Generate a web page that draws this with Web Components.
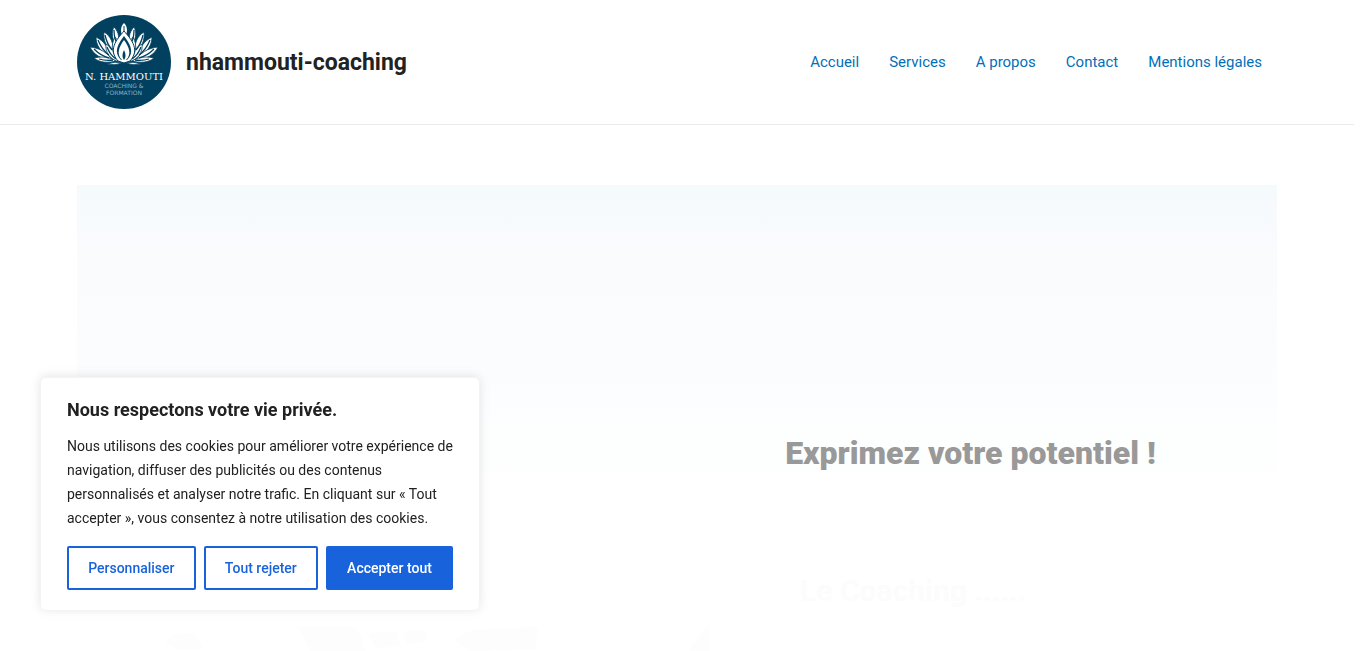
<!DOCTYPE html>
<html lang="fr">
<head>
<meta charset="utf-8">
<meta name="viewport" content="width=device-width, initial-scale=1">
<title>nhammouti-coaching</title>
<style>
    body {
        margin: 0;
        background: #fff;
        color: #212121;
        font-family: Roboto, "Liberation Sans", sans-serif;
    }
</style>
</head>
<body>
<my-app></my-app>

<template id="site-logo">
    <style>
        :host { display: block; }
        a {
            display: flex;
            align-items: center;
            gap: 15px;
            color: #222;
            text-decoration: none;
            font-size: 23px;
            line-height: 29px;
            font-weight: 700;
        }
        svg { display: block; width: 94px; height: 94px; }
    </style>
    <a href="#">
        <svg viewBox="0 0 94 94" aria-hidden="true">
            <defs>
                <!-- left half of the lotus, back petals first, mirrored below -->
                <g id="petals" stroke="#02405f" stroke-width="0.8">
                    <path d="M37 12C34 17 35 25 40 31C43 24 42 17 37 12Z"/>
                    <path d="M27 17C26 25 29 32 36 38C37 29 34 21 27 17Z"/>
                    <path d="M19 22C19 30 24 38 33 42C32 33 27 26 19 22Z"/>
                    <path d="M13 32C17 40 24 44 35 45C31 38 23 33 13 32Z"/>
                    <path d="M17 43C23 48 31 48 39 46C33 42 25 41 17 43Z"/>
                    <path d="M29 29C28 38 33 44 42 47C40 39 36 33 29 29Z"/>
                    <path d="M38 22C33 31 35 40 43 46C46 37 44 29 38 22Z"/>
                    <path d="M30 49Q38 46 45 48Q38 51 30 49Z"/>
                </g>
                <g id="veins" fill="none" stroke="#02405f" stroke-width="1.3">
                    <path d="M37 15Q37 23 40 28"/>
                    <path d="M28 20Q30 29 35 35"/>
                    <path d="M21 25Q25 35 32 40"/>
                    <path d="M17 34Q24 41 32 43"/>
                    <path d="M22 44Q29 46 36 45"/>
                    <path d="M30 32Q33 40 39 44"/>
                </g>
            </defs>
            <circle cx="47" cy="47" r="47" fill="#02405f"/>
            <g fill="#fff">
                <path d="M47 8C43 12 43 18 47 24C51 18 51 12 47 8Z"/>
                <path d="M47 11V17" stroke="#02405f"/>
                <use href="#petals"/>
                <use href="#veins"/>
                <use href="#petals" transform="translate(94 0) scale(-1 1)"/>
                <use href="#veins" transform="translate(94 0) scale(-1 1)"/>
                <path d="M47 16C39 25 31 35 41 46L47 48L53 46C63 35 55 25 47 16Z" stroke="#02405f"/>
                <path d="M47 21C41 29 36 37 44 45H50C58 37 53 29 47 21Z" fill="#02405f"/>
                <path d="M47 25C42 32 39 39 45 45L47 47L49 45C55 39 52 32 47 25Z"/>
                <path d="M47 35Q44 41 47 45Q50 41 47 35Z" fill="#02405f"/>
            </g>
            <g text-anchor="middle" font-weight="400">
                <text x="47" y="65" fill="#fff" font-family="DejaVu Serif, serif" font-size="10">N. HAMMOUTI</text>
                <g fill="#8fb0c0" font-family="DejaVu Sans, sans-serif" font-size="6">
                    <text x="47" y="73">COACHING &amp;</text>
                    <text x="47" y="80">FORMATION</text>
                </g>
            </g>
        </svg>
        <slot></slot>
    </a>
</template>

<template id="nav-link">
    <style>
        :host { display: block; }
        a {
            display: block;
            padding: 0 15px;
            color: #0170b9;
            font-size: 15px;
            line-height: 24px;
            text-decoration: none;
        }
    </style>
    <a href="#"><slot></slot></a>
</template>

<template id="site-header">
    <style>
        :host { display: block; border-bottom: 1px solid #eaeaea; }
        header {
            display: flex;
            align-items: center;
            justify-content: space-between;
            max-width: 1200px;
            margin: 0 auto;
            padding: 15px 20px;
        }
        nav { display: flex; }
    </style>
    <header>
        <site-logo>nhammouti-coaching</site-logo>
        <nav><slot></slot></nav>
    </header>
</template>

<template id="hero-banner">
    <style>
        :host { display: block; }
        section {
            display: grid;
            grid-template-columns: 1fr 1fr;
            padding-top: 248px;
            background: linear-gradient(#f5fafd, #f9fbfd 22%, #fbfcfe 60%, #fdfefe 85%, #fefefe);
        }
        h1 {
            grid-column: 2;
            margin: 0 13px 0 0;
            color: #999;
            font-size: 32px;
            line-height: 40px;
            font-weight: 900;
            text-align: center;
        }
    </style>
    <section><h1><slot></slot></h1></section>
</template>

<template id="coaching-intro">
    <style>
        :host { display: block; }
        section {
            display: grid;
            grid-template-columns: 1fr 1fr;
            padding-top: 98px;
        }
        h2 {
            grid-column: 2;
            margin: 0;
            padding-left: 123px;
            color: #fcfcfc;
            font-size: 30px;
            line-height: 40px;
            font-weight: 700;
        }
        svg {
            display: block;
            width: 100%;
            height: 24px;
            margin-top: 16px;
            overflow: visible;
        }
    </style>
    <section>
        <h2><slot></slot></h2>
        <svg viewBox="0 0 600 24" preserveAspectRatio="xMinYMin" aria-hidden="true">
            <!-- top of the photo, still fading in -->
            <g fill="#fdfdfd">
                <path d="M88 16L96 8L118 6L126 22H100Z"/>
                <path d="M222 0H275L284 8L288 24H232Z"/>
                <path d="M290 6L318 4L324 18L300 22Z"/>
                <path d="M326 4H352L348 14L330 18Z"/>
                <path d="M376 12L398 2L462 0L458 22L392 24Z"/>
                <path d="M612 24L628 0H633V24Z"/>
            </g>
        </svg>
    </section>
</template>

<template id="consent-button">
    <style>
        :host { display: block; flex: 1 1 auto; }
        button {
            width: 100%;
            padding: 8px 19px;
            border: 2px solid #1863dc;
            border-radius: 2px;
            background: transparent;
            color: #1863dc;
            font: 500 14px/24px Roboto, "Liberation Sans", sans-serif;
            height: 44px;
            white-space: nowrap;
            cursor: pointer;
        }
        :host([primary]) button { background: #1863dc; color: #fff; }
    </style>
    <button type="button"><slot></slot></button>
</template>

<template id="cookie-consent">
    <style>
        :host {
            position: fixed;
            left: 40px;
            bottom: 40px;
            z-index: 10;
            box-sizing: border-box;
            width: 440px;
            max-width: calc(100% - 80px);
            padding: 20px 26px;
            border: 1px solid #f4f4f4;
            border-radius: 6px;
            background: #fff;
            box-shadow: 0 -1px 10px #acabab4d;
        }
        h2 { margin: 0 0 12px; font-size: 18px; line-height: 24px; font-weight: 700; }
        p { margin: 0 0 16px; font-size: 14px; line-height: 24px; }
        .actions { display: flex; gap: 8px; }
    </style>
    <h2>Nous respectons votre vie privée.</h2>
    <p><slot></slot></p>
    <div class="actions">
        <consent-button>Personnaliser</consent-button>
        <consent-button>Tout rejeter</consent-button>
        <consent-button primary>Accepter tout</consent-button>
    </div>
</template>

<template id="my-app">
    <style>
        :host { display: block; padding-right: 12px; }
        main { max-width: 1200px; margin: 0 auto; padding: 60px 20px 0; }
    </style>
    <site-header>
        <nav-link>Accueil</nav-link>
        <nav-link>Services</nav-link>
        <nav-link>A propos</nav-link>
        <nav-link>Contact</nav-link>
        <nav-link>Mentions légales</nav-link>
    </site-header>
    <main>
        <hero-banner>Exprimez votre potentiel !</hero-banner>
        <coaching-intro>Le Coaching ......</coaching-intro>
    </main>
    <cookie-consent>Nous utilisons des cookies pour améliorer votre expérience de navigation, diffuser des publicités ou des contenus personnalisés et analyser notre trafic. En cliquant sur « Tout accepter », vous consentez à notre utilisation des cookies.</cookie-consent>
</template>

<script>
// Each element takes its markup from the template that has its tag name as id
class TemplateElement extends HTMLElement {
    constructor() {
        super();

        const template = document.getElementById(this.localName);
        this._shadowRoot = this.attachShadow({ mode: 'open' });
        this._shadowRoot.appendChild(template.content.cloneNode(true));
    }
}

class SiteLogo extends TemplateElement {}
class NavLink extends TemplateElement {}
class SiteHeader extends TemplateElement {}
class HeroBanner extends TemplateElement {}
class CoachingIntro extends TemplateElement {}
class ConsentButton extends TemplateElement {}
class CookieConsent extends TemplateElement {}
class App extends TemplateElement {}

window.customElements.define('site-logo', SiteLogo);
window.customElements.define('nav-link', NavLink);
window.customElements.define('site-header', SiteHeader);
window.customElements.define('hero-banner', HeroBanner);
window.customElements.define('coaching-intro', CoachingIntro);
window.customElements.define('consent-button', ConsentButton);
window.customElements.define('cookie-consent', CookieConsent);
window.customElements.define('my-app', App);
</script>
</body>
</html>
